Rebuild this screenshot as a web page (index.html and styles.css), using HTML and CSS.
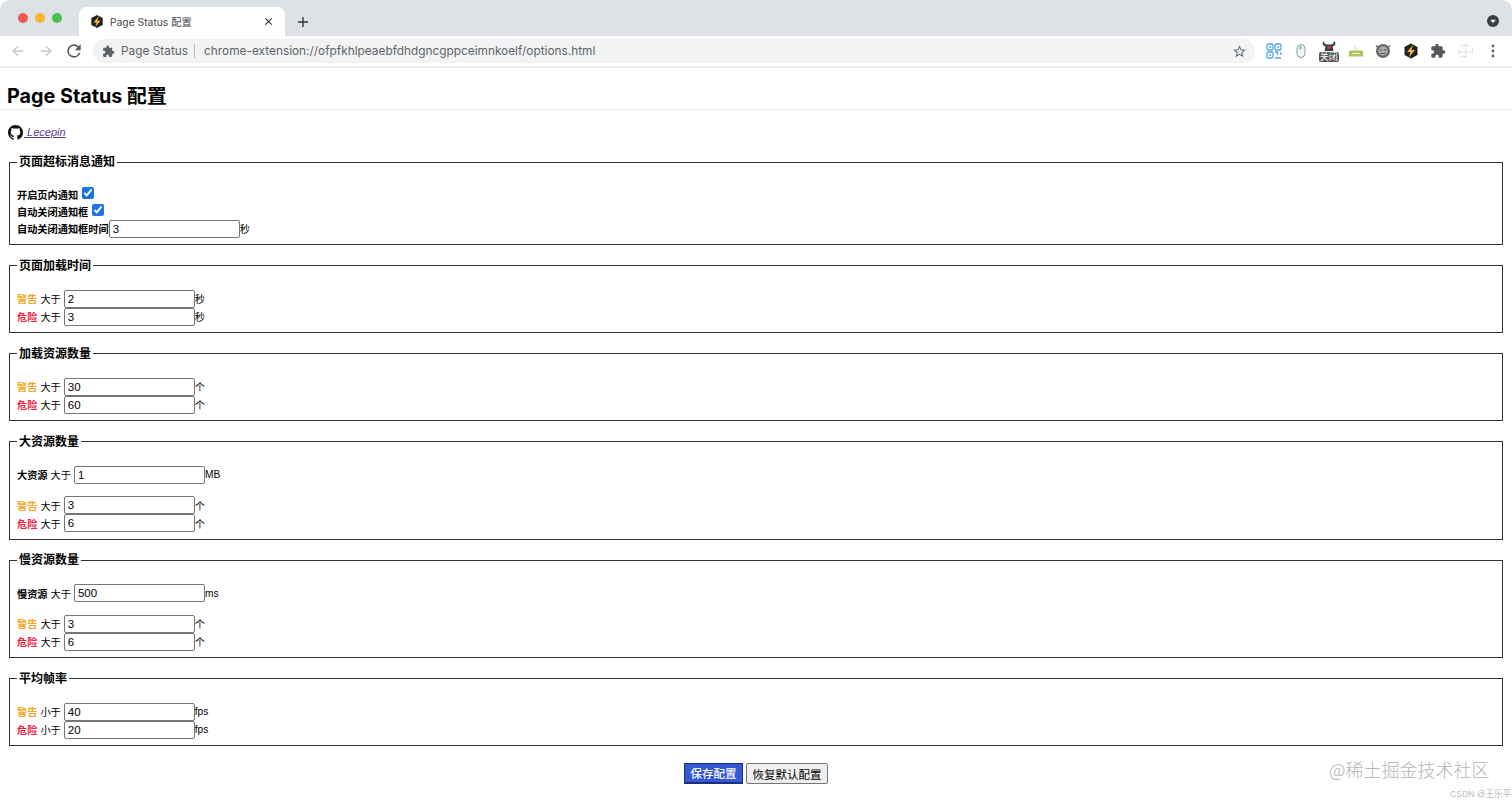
FILE: index.html
```html
<!DOCTYPE html>
<html lang="zh-CN">
<head>
<meta charset="utf-8">
<title>Page Status 配置</title>
<link rel="stylesheet" href="styles.css">
</head>
<body>
<header class="browser">
  <div class="tabstrip">
    <div class="lights"><i class="light red"></i><i class="light yellow"></i><i class="light green"></i></div>
    <div class="tab">
      <svg class="favicon" viewBox="0 0 16 16"><path d="M8 .5 14.500 4v8L8 15.500 1.500 12V4z" fill="#222"/><path d="M10 1.800 4 9h3.500L6 14.200 12 7H8.500z" fill="#f5b83d"/></svg>
      <span class="tab-title">Page Status 配置</span>
      <svg class="tab-close" viewBox="0 0 10 10"><path d="M1.500 1.500l7 7M8.500 1.500l-7 7" stroke="#333" stroke-width="1.300" fill="none"/></svg>
    </div>
    <svg class="new-tab" viewBox="0 0 12 12"><path d="M6 1v10M1 6h10" stroke="#333" stroke-width="1.400" fill="none"/></svg>
    <svg class="profile" viewBox="0 0 12 12"><circle cx="6" cy="6" r="6" fill="#3c4043"/><path d="M3.200 4.800h5.600L6 8z" fill="#fff"/></svg>
  </div>
  <div class="toolbar">
    <svg class="nav" viewBox="0 0 16 16"><path d="M14 8H2.500M8 2.500 2.500 8 8 13.500" stroke="#c4c7cb" stroke-width="1.500" fill="none"/></svg>
    <svg class="nav" viewBox="0 0 16 16"><path d="M2 8h11.500M8 2.500 13.500 8 8 13.500" stroke="#c4c7cb" stroke-width="1.500" fill="none"/></svg>
    <svg class="nav reload" viewBox="0 0 24 24"><path fill="#55585c" d="M17.650 6.350A7.960 7.960 0 0 0 12 4a8 8 0 1 0 7.730 10h-2.080A6 6 0 1 1 12 6c1.660 0 3.140.69 4.220 1.780L13 11h7V4z"/></svg>
    <div class="omnibox">
      <svg class="omni-puzzle" viewBox="0 0 24 24"><path fill="#5f6368" d="M20.500 11H19V7c0-1.100-.9-2-2-2h-4V3.500C13 2.120 11.880 1 10.500 1S8 2.120 8 3.500V5H4c-1.100 0-1.990.9-1.990 2v3.800H3.500c1.490 0 2.700 1.210 2.700 2.700s-1.210 2.700-2.700 2.700H2V20c0 1.100.9 2 2 2h3.800v-1.500c0-1.490 1.210-2.700 2.700-2.700 1.490 0 2.700 1.210 2.700 2.700V22H17c1.100 0 2-.9 2-2v-4h1.500c1.380 0 2.500-1.120 2.500-2.500S21.880 11 20.500 11z"/></svg>
      <span class="omni-name">Page Status</span>
      <span class="omni-url">chrome-extension://ofpfkhlpeaebfdhdgncgppceimnkoelf/options.html</span>
      <svg class="star" viewBox="0 0 24 24"><path fill="#5f6368" d="M22 9.240l-7.190-.62L12 2 9.190 8.630 2 9.240l5.460 4.730L5.820 21 12 17.270 18.180 21l-1.630-7.030L22 9.240zM12 15.400l-3.760 2.270 1-4.280-3.320-2.880 4.380-.38L12 6.100l1.710 4.040 4.380.38-3.320 2.880 1 4.280L12 15.400z"/></svg>
    </div>
    <div class="extensions">
      <svg class="ext" viewBox="0 0 16 16"><g fill="none" stroke="#4aa8e8" stroke-width="1.300"><rect x="1" y="1" width="6" height="6" rx="1.500"/><rect x="9" y="1" width="6" height="6" rx="1.500"/><rect x="1" y="9" width="6" height="6" rx="1.500"/><path d="M9 9h2.500v3M15 9v3M9 15h6"/></g><circle cx="4" cy="4" r="1" fill="#4aa8e8"/><circle cx="12" cy="4" r="1" fill="#4aa8e8"/><circle cx="4" cy="12" r="1" fill="#4aa8e8"/></svg>
      <svg class="ext" viewBox="0 0 16 16"><rect x="4" y="1.500" width="8" height="13" rx="4" fill="#f4f7fa" stroke="#8b98a5"/><path d="M4 7V5.500a4 4 0 0 1 4-4V7z" fill="#bcdcd5"/><path d="M8 3v3" stroke="#8b98a5"/></svg>
      <div class="ext ext-badge">
        <svg class="devil" viewBox="0 0 18 10"><path d="M4 0C2.500 1 2 3 3.500 4.500L5.500 5.500 4.500 10h9l-1-4.500 2-1C16 3 15.500 1 14 0c.2 2-1 3-2.500 3.500h-5C5 3 3.800 2 4 0z" fill="#3a3d41"/><circle cx="9" cy="6.500" r="1.800" fill="#c9304a"/></svg>
        <span class="badge-label">关闭</span>
      </div>
      <svg class="ext" viewBox="0 0 16 16"><path d="M1 7.500h14v6H1z" fill="#a9c458"/><path d="M4 10.500h8" stroke="#eef3d6" stroke-width="1.200"/><path d="M7 3v4M9.500 5v2" stroke="#d5d8c8"/></svg>
      <svg class="ext" viewBox="0 0 16 16"><circle cx="8" cy="8" r="7" fill="#66686b"/><circle cx="8" cy="8" r="4.700" fill="#a9aaac"/><path d="M5 7h2M9 7h2M5.500 10.500h5" stroke="#555"/><path d="M2.500 4 1 2.500M13.500 4 15 2.500" stroke="#66686b" stroke-width="1.500"/></svg>
      <svg class="ext" viewBox="0 0 16 16"><path d="M8 .5 14.500 4v8L8 15.500 1.500 12V4z" fill="#222"/><path d="M10 1.800 4 9h3.500L6 14.200 12 7H8.500z" fill="#f5b83d"/></svg>
      <svg class="ext" viewBox="0 0 24 24"><path fill="#55585c" d="M20.500 11H19V7c0-1.100-.9-2-2-2h-4V3.500C13 2.120 11.880 1 10.500 1S8 2.120 8 3.500V5H4c-1.100 0-1.990.9-1.990 2v3.800H3.500c1.490 0 2.700 1.210 2.700 2.700s-1.210 2.700-2.700 2.700H2V20c0 1.100.9 2 2 2h3.800v-1.500c0-1.490 1.210-2.700 2.700-2.700 1.490 0 2.700 1.210 2.700 2.700V22H17c1.100 0 2-.9 2-2v-4h1.500c1.380 0 2.500-1.120 2.500-2.500S21.880 11 20.500 11z"/></svg>
      <svg class="ext" viewBox="0 0 18 18"><path d="M9 0v18M1 10h16M4 3h9M1 7v6M16 6v5M4 15h5" stroke="#c9cbcd" fill="none" stroke-dasharray="2 1"/></svg>
      <svg class="ext dots" viewBox="0 0 4 16"><circle cx="2" cy="3" r="1.400" fill="#5f6368"/><circle cx="2" cy="8" r="1.400" fill="#5f6368"/><circle cx="2" cy="13" r="1.400" fill="#5f6368"/></svg>
    </div>
  </div>
</header>

<main class="page">
  <h1 class="title">Page Status 配置</h1>
  <p class="author">
    <a class="author-link" href="#"><svg class="github" viewBox="0 0 16 16"><path d="M8 0C3.580 0 0 3.580 0 8c0 3.540 2.290 6.530 5.470 7.590.4.07.55-.17.55-.38 0-.19-.01-.82-.01-1.490-2.010.37-2.530-.49-2.690-.94-.09-.23-.48-.94-.82-1.130-.28-.15-.68-.52-.01-.53.63-.01 1.080.58 1.230.82.72 1.210 1.870.87 2.330.66.07-.52.28-.87.51-1.070-1.780-.2-3.640-.89-3.640-3.950 0-.87.31-1.590.82-2.150-.08-.2-.36-1.020.08-2.120 0 0 .67-.21 2.200.82.64-.18 1.320-.27 2-.27.68 0 1.360.09 2 .27 1.530-1.040 2.200-.82 2.200-.82.44 1.100.16 1.920.08 2.120.51.56.82 1.270.82 2.150 0 3.070-1.870 3.750-3.650 3.950.29.25.54.73.54 1.480 0 1.070-.01 1.930-.01 2.200 0 .21.15.46.55.38A8.013 8.013 0 0 0 16 8c0-4.420-3.580-8-8-8z"/></svg> Lecepin</a>
  </p>

  <form class="config">
    <fieldset class="group">
      <legend>页面超标消息通知</legend>
      <div class="rows">
        <label class="row row-check"><b>开启页内通知</b><input class="check" type="checkbox" checked></label>
        <label class="row row-check"><b>自动关闭通知框</b><input class="check" type="checkbox" checked></label>
        <label class="row"><b>自动关闭通知框时间</b><input class="num" value="3">秒</label>
      </div>
    </fieldset>

    <fieldset class="group">
      <legend>页面加载时间</legend>
      <div class="rows">
        <label class="row"><b class="warn">警告</b><span class="cmp">大于</span><input class="num" value="2">秒</label>
        <label class="row"><b class="danger">危险</b><span class="cmp">大于</span><input class="num" value="3">秒</label>
      </div>
    </fieldset>

    <fieldset class="group">
      <legend>加载资源数量</legend>
      <div class="rows">
        <label class="row"><b class="warn">警告</b><span class="cmp">大于</span><input class="num" value="30">个</label>
        <label class="row"><b class="danger">危险</b><span class="cmp">大于</span><input class="num" value="60">个</label>
      </div>
    </fieldset>

    <fieldset class="group">
      <legend>大资源数量</legend>
      <div class="rows">
        <label class="row row-lead"><b>大资源</b><span class="cmp">大于</span><input class="num" value="1">MB</label>
        <label class="row"><b class="warn">警告</b><span class="cmp">大于</span><input class="num" value="3">个</label>
        <label class="row"><b class="danger">危险</b><span class="cmp">大于</span><input class="num" value="6">个</label>
      </div>
    </fieldset>

    <fieldset class="group">
      <legend>慢资源数量</legend>
      <div class="rows">
        <label class="row row-lead"><b>慢资源</b><span class="cmp">大于</span><input class="num" value="500">ms</label>
        <label class="row"><b class="warn">警告</b><span class="cmp">大于</span><input class="num" value="3">个</label>
        <label class="row"><b class="danger">危险</b><span class="cmp">大于</span><input class="num" value="6">个</label>
      </div>
    </fieldset>

    <fieldset class="group">
      <legend>平均帧率</legend>
      <div class="rows">
        <label class="row"><b class="warn">警告</b><span class="cmp">小于</span><input class="num" value="40">fps</label>
        <label class="row"><b class="danger">危险</b><span class="cmp">小于</span><input class="num" value="20">fps</label>
      </div>
    </fieldset>

    <div class="actions">
      <button class="btn btn-primary" type="button">保存配置</button>
      <button class="btn" type="button">恢复默认配置</button>
    </div>
  </form>
</main>

<div class="watermark">@稀土掘金技术社区</div>
<div class="credit">CSDN @王乐平</div>
</body>
</html>
```

FILE: styles.css
```css
html, body {
  margin: 0;
  height: 802px;
  overflow: hidden;
  background: #fff;
  font-family: "Liberation Sans", "Noto Sans CJK SC", sans-serif;
  color: #000;
}

/* browser chrome */
.tabstrip {
  height: 36px;
  background: #dee1e6;
  display: flex;
  align-items: flex-end;
  border-radius: 10px 10px 0 0;
}
.lights {
  display: flex;
  gap: 7px;
  padding: 0 0 13px 18px;
  width: 61px;
}
.light { width: 10px; height: 10px; border-radius: 50%; }
.red { background: #ee5a52; }
.yellow { background: #f5b52e; }
.green { background: #45c14f; }
.tab {
  width: 206px;
  height: 29px;
  background: #fff;
  border-radius: 8px 8px 0 0;
  display: flex;
  align-items: center;
  padding: 0 12px 0 11px;
  box-sizing: border-box;
  font: 10.300px "Inter", "Noto Sans CJK SC", sans-serif;
  color: #45484c;
}
.favicon { width: 14px; height: 15px; margin-right: 6px; }
.tab-title { flex: 1; white-space: nowrap; }
.tab-close { width: 9px; height: 9px; }
.new-tab { width: 12px; height: 12px; margin: 0 0 8px 12px; }
.profile { width: 12px; height: 12px; margin: 0 13px 9px auto; }

.toolbar {
  height: 30px;
  display: flex;
  align-items: center;
  padding: 0 11px 0 11px;
  border-bottom: 2px solid #ececee;
}
.nav { width: 14px; height: 14px; margin-right: 14px; }
.nav.reload { width: 20px; height: 20px; margin: 0 9px 0 -3px; }
.omnibox {
  width: 1162px;
  height: 24px;
  background: #f1f3f4;
  border-radius: 12px;
  display: flex;
  align-items: center;
  padding: 0 8px 0 9px;
  box-sizing: border-box;
  font: 11.850px "Inter", sans-serif;
  color: #5f6368;
  white-space: nowrap;
}
.omni-puzzle { width: 13px; height: 13px; margin-right: 6px; }
.omni-name { padding-right: 6px; border-right: 1px solid #b8babd; line-height: 14px; margin-right: 9px; }
.omni-url { flex: 1; }
.star { width: 15px; height: 15px; }
.extensions {
  display: flex;
  align-items: center;
  gap: 11.400px;
  padding-left: 11px;
}
.ext { width: 16px; height: 16px; display: block; flex: none; }
.ext.dots { width: 4px; margin: 0 6px; }
.ext-badge {
  height: 24px;
  display: flex;
  flex-direction: column;
  align-items: center;
  margin-top: 2px;
}
.devil { width: 18px; height: 12px; display: block; flex: none; }
.badge-label {
  background: #55585b;
  color: #fff;
  font: 9px/10px "Noto Sans CJK SC", sans-serif;
  padding: 0 1px;
  border-radius: 2px;
  white-space: nowrap;
}

/* page */
.page { padding: 0 9px; }
.title {
  margin: 0 -9px;
  padding: 16px 0 1px 7px;
  font: 700 19.800px/24px "Inter", "Noto Sans CJK SC", sans-serif;
  border-bottom: 1px solid #e9e9e9;
}
.author { margin: 14px 0 0 -1px; height: 17px; font-size: 11px; line-height: 17px; }
.author-link { color: #5b3a96; font-style: italic; }
.github { width: 15px; height: 15px; fill: #111; vertical-align: -4px; margin-right: 1px; }

.config { margin-top: 14px; }
.group {
  margin: 0 0 13.400px;
  padding: 0 7px 6.600px;
  border: 1px solid #333;
  min-width: 0;
}
.group legend {
  padding: 0 2px;
  font-size: 12px;
  font-weight: 700;
  line-height: 14px;
}
.rows { padding-top: 17px; }
.row {
  display: flex;
  align-items: center;
  height: 18px;
  font-size: 10.200px;
  white-space: nowrap;
}
.row-check { height: 16.900px; }
.row b { font-weight: 700; }
.row-lead { margin-bottom: 12.500px; }
.warn { color: #f5a623; }
.danger { color: #f5223d; }
.cmp { margin: 0 3px; }
.check { width: 12px; height: 12px; margin: 0 0 2px 4px; accent-color: #1a73e8; }
.num {
  width: 131px;
  height: 18px;
  box-sizing: border-box;
  border: 1px solid #767676;
  border-radius: 2px;
  padding: 1px 3px;
  font: 11.500px "Liberation Sans", sans-serif;
  margin: 0;
}
.actions {
  display: flex;
  justify-content: center;
  gap: 3px;
  margin-top: 17px;
}
.btn {
  height: 21px;
  width: 82px;
  padding: 0;
  font: 11.500px "Noto Sans CJK SC", sans-serif;
  background: #efefef;
  border: 1px solid #767676;
  border-radius: 2px;
}
.btn-primary {
  width: 59px;
  background: #3558d4;
  color: #fff;
  border: 1px solid #1f2f80;
  border-bottom-width: 2px;
  border-radius: 0;
  font-weight: 500;
}

.watermark {
  position: absolute;
  left: 1329px;
  top: 756px;
  font: 300 18px/26px "Noto Sans CJK SC", sans-serif;
  color: #b4b4b4;
  white-space: nowrap;
}
.credit {
  position: absolute;
  left: 1450px;
  top: 788px;
  font: 8.600px/12px "Liberation Sans", "Noto Sans CJK SC", sans-serif;
  color: #b9bdc4;
  white-space: nowrap;
}
```
